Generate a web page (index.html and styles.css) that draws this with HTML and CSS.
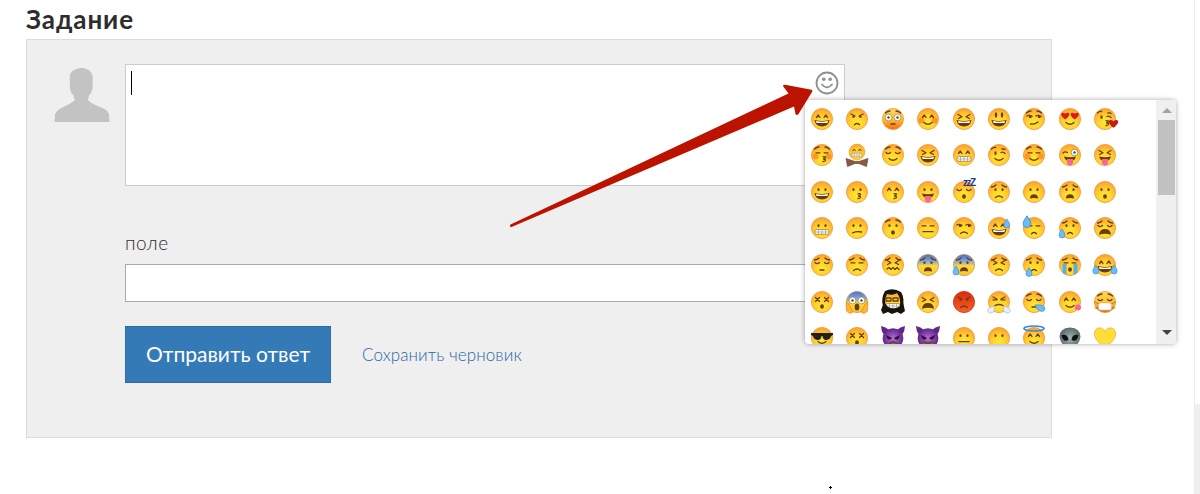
FILE: index.html
```html
<!DOCTYPE html>
<html lang="ru">
<head>
    <meta charset="UTF-8">
    <meta name="viewport" content="width=device-width, initial-scale=1.0">
    <title>Задание</title>
    <link rel="stylesheet" href="styles.css">
</head>
<body>
    <div class="page">
        <h1>Задание</h1>
        <form class="answer">
            <svg class="avatar" viewBox="0 0 56 54">
                <path d="M27 0C32 0 37.500 2 38.500 8Q39 12 38.500 16.500Q39.500 18.500 38 22Q37.500 26 35 27.500Q34.500 31 34 32C40 39 52 38 55 46L55.500 54H.5L1 46C4 39 15 38 21 32Q20 31 19.500 27.500Q17 26 16.500 22Q15 19 16 16.500Q15.500 10 16 6.500Q18 1 27 0Z"/>
            </svg>
            <div class="fields">
                <div class="message">
                    <span class="caret"></span>
                    <svg class="smile" viewBox="0 0 24 24">
                        <circle cx="12" cy="12" r="10.500"/>
                        <path d="M7 13.500q5 6 10 0"/>
                        <circle class="eye" cx="8.800" cy="8.300" r="1.800"/>
                        <circle class="eye" cx="15.200" cy="8.300" r="1.800"/>
                    </svg>
                    <div class="picker">
                        <div class="emojis" id="emojis"></div>
                        <div class="scroll">
                            <i class="up"></i>
                            <div class="thumb"></div>
                            <i class="down"></i>
                        </div>
                    </div>
                </div>
                <label for="field">поле</label>
                <input type="text" id="field">
                <div class="actions">
                    <button type="button">Отправить ответ</button>
                    <a href="#">Сохранить черновик</a>
                </div>
            </div>
        </form>
    </div>
    <div class="side"></div>
    <span class="dot"></span>
    <svg class="arrow" viewBox="0 0 310 150">
        <path d="M1.500 144.500L279.500 13.500L274.300 6.500Q273.500 4.500 276 4.800L302.500 9.800Q304 10.500 303 12L289.500 34Q287.500 36 286.500 34L285 26.500L2.500 147Q0 147.500 1.500 144.500Z"/>
    </svg>
    <svg class="defs">
        <defs>
            <radialGradient id="yellow" cx=".5" cy=".68" r=".68"><stop offset="0" stop-color="#ffe92f"/><stop offset=".5" stop-color="#ffcf2f"/><stop offset="1" stop-color="#fb9f2f"/></radialGradient>
            <linearGradient id="warm" x2="0" y2="1"><stop offset="0" stop-color="#ffd45c"/><stop offset=".5" stop-color="#ffc52b"/><stop offset="1" stop-color="#f5661b"/></linearGradient>
            <linearGradient id="blue" x2="0" y2="1"><stop offset="0" stop-color="#3b6fe0"/><stop offset=".35" stop-color="#92a9cc"/><stop offset=".55" stop-color="#ffd93a"/><stop offset="1" stop-color="#ffc42b"/></linearGradient>
            <linearGradient id="red" x2="0" y2="1"><stop offset="0" stop-color="#dc2a0d"/><stop offset="1" stop-color="#f4622a"/></linearGradient>
            <radialGradient id="purple"><stop offset="0" stop-color="#b56ccf"/><stop offset="1" stop-color="#61268b"/></radialGradient>
            <radialGradient id="grey"><stop offset="0" stop-color="#a6b3b2"/><stop offset="1" stop-color="#586b6e"/></radialGradient>
        </defs>
    </svg>
    <script src="script.js"></script>
</body>
</html>
```
FILE: styles.css
```css
* {
    box-sizing: border-box;
}
body {
    position: relative;
    margin: 0;
    height: 494px;
    overflow: hidden;
    background: #fff;
    color: #2d2d2d;
    font-family: Lato, "Open Sans", sans-serif;
    display: flex;
    justify-content: space-between;
}
.page {
    width: 1026px;
    margin-left: 26px;
}
h1 {
    margin: 0;
    height: 39px;
    padding-top: 2px;
    font-size: 26px;
    line-height: 34px;
    letter-spacing: 0.9px;
    font-weight: bold;
}
.answer {
    display: flex;
    height: 399px;
    padding: 24px 27px 0;
    background: #efefef;
    border: 1px solid #dcdcdc;
}
.avatar {
    width: 56px;
    height: 54px;
    margin: 3.500px 15px 0 0;
    fill: #c3c3c3;
}
.fields {
    width: 720px;
}
.message {
    position: relative;
    height: 122px;
    padding: 6px 5px;
    border: 1px solid #ccc;
    background: #fff;
    display: flex;
    justify-content: space-between;
}
.caret {
    width: 1px;
    height: 24px;
    background: #000;
}
.smile {
    width: 24px;
    height: 24px;
    fill: none;
    stroke: #8b9096;
    stroke-width: 1.8;
    stroke-linecap: round;
}
.smile .eye {
    fill: #8b9096;
    stroke: none;
}
.picker {
    position: absolute;
    left: 679px;
    top: 35px;
    width: 371px;
    height: 244px;
    display: flex;
    overflow: hidden;
    background: #fff;
    border-radius: 4px;
    box-shadow: 0 0 5px rgba(0, 0, 0, 0.35);
}
.emojis {
    flex: 1;
    margin-left: -0.7px;
    display: grid;
    grid-template-columns: repeat(9, 35.4px);
    grid-auto-rows: 36.55px;
    place-items: center;
    align-content: start;
    padding-top: 0.5px;
}
.emojis svg {
    width: 24px;
    height: 24px;
    overflow: visible;
}
.line {
    fill: none;
    stroke: #6b3d0c;
    stroke-width: 1.3;
    stroke-linecap: round;
    stroke-linejoin: round;
}
.ink {
    fill: #6b3d0c;
}
.white {
    fill: #fff;
    stroke: #6b4a20;
    stroke-width: 0.5;
}
.drop {
    fill: #6cbcf5;
    stroke: #3487cf;
    stroke-width: 0.6;
}
.zzz {
    fill: #1e3a8c;
    font: bold 10px "Liberation Sans", sans-serif;
}
.scroll {
    width: 20px;
    padding: 8px 1px 9px 2px;
    background: #f0f0f0;
    display: flex;
    flex-direction: column;
    align-items: center;
}
.thumb {
    width: 17px;
    height: 75px;
    margin: 7px 0 auto;
    background: #c1c1c1;
}
.up,
.down {
    border: 5px solid transparent;
    border-top-width: 0;
    border-bottom-color: #a3a3a3;
}
.down {
    border-width: 5px 5px 0;
    border-top-color: #444;
}
label {
    display: block;
    height: 78px;
    padding-top: 45px;
    font-size: 19px;
    font-weight: 300;
    line-height: 24px;
    letter-spacing: 0.5px;
}
input {
    display: block;
    width: 100%;
    height: 38px;
    border: 1px solid #aaa;
    background: #fff;
}
.actions {
    display: flex;
    align-items: center;
    margin-top: 24px;
}
button {
    width: 206px;
    height: 57px;
    padding: 0 0 2px;
    border: 1px solid #2e6da4;
    background: #337ab7;
    color: #fff;
    font: 21px Lato, "Open Sans", sans-serif;
}
.actions a {
    margin-left: 31px;
    color: #1f68a8;
    font-size: 17px;
    font-weight: 300;
    letter-spacing: 0.1px;
    text-decoration: none;
}
.side {
    width: 6px;
    border-left: 1px solid #ececec;
    background: linear-gradient(#fff 404px, #efefef 404px);
}
.dot {
    position: absolute;
    left: 829px;
    top: 487px;
    width: 3px;
    height: 1px;
    background: #000;
}
.dot::after {
    content: "";
    position: absolute;
    left: 1px;
    top: -1px;
    width: 1px;
    height: 3px;
    background: #000;
}
.arrow {
    position: absolute;
    left: 509px;
    top: 80px;
    width: 310px;
    height: 150px;
    overflow: visible;
    fill: #bb1300;
}
.defs {
    position: absolute;
    width: 0;
    height: 0;
}
```
FILE: script.js
```javascript
const line = d => `<path class="line" d="${d}"/>`;
const ink = d => `<path class="ink" d="${d}"/>`;
const face = fill => `<circle cx="12" cy="12" r="10.600" fill="url(#${fill})" stroke="${fill === 'red' ? '#c9310f' : fill === 'blue' ? '#c09a50' : '#ee9b3c'}" stroke-width=".8"/>`;
const heart = (x, y, s, c) => `<path transform="translate(${x} ${y}) scale(${s})" fill="${c}" d="M0 3C-8-3-3-6 0-3C3-6 8-3 0 3Z"/>`;
const drop = (x, y, s) => `<path class="drop" transform="translate(${x} ${y}) scale(${s})" d="M0-4Q3 0 3 2A3 3 0 0 1-3 2Q-3 0 0-4Z"/>`;
const horns = '<path fill="#61268b" d="M0 0Q5 1 8 4L3 9Q0 5 0 0ZM24 0Q19 1 16 4L21 9Q24 5 24 0Z"/><circle cx="12" cy="12.500" r="10.300" fill="url(#purple)"/>';

const parts = {
    yellow: face('yellow'),
    warm: face('warm'),
    blue: face('blue'),
    red: face('red'),
    imp: horns,

    // eyes
    dots: '<ellipse class="ink" cx="8.500" cy="9.700" rx="1.100" ry="1.400"/><ellipse class="ink" cx="15.500" cy="9.700" rx="1.100" ry="1.400"/>',
    tall: '<ellipse class="ink" cx="9" cy="8" rx="1.200" ry="2.800"/><ellipse class="ink" cx="15" cy="8" rx="1.200" ry="2.800"/>',
    happy: line('M6.500 10.500L8.300 8L10 10.500M14 10.500L15.700 8L17.500 10.500'),
    closed: line('M5 9.500q2.200 2.200 4.500 0M14.500 9.500q2.200 2.200 4.500 0'),
    shut: line('M6 9.800h4M14 9.800h4'),
    squint: line('M6 7.500L10 9.700L6.500 11.500M18 7.500L14 9.700L17.500 11.500'),
    cross: line('M5.500 7.500l4 4m0-4l-4 4M14.500 7.500l4 4m0-4l-4 4'),
    wide: '<circle class="white" cx="7.500" cy="10.500" r="3.400"/><circle class="white" cx="16.500" cy="10.500" r="3.400"/><circle class="ink" cx="7.500" cy="10.500" r="1.200"/><circle class="ink" cx="16.500" cy="10.500" r="1.200"/>',
    hearts: heart(7.3, 9.7, .95, '#db1b18') + heart(16.7, 9.7, .95, '#db1b18'),
    side: line('M5 9q2-1.500 5 .3M14 9q2-1.500 5 .3') + ink('M7 9h2.500v2h-2.500zM16 9h2.500v2h-2.500z'),
    wink: ink('M7.500 8.500h2v3.200h-2z') + line('M14 9.500q2-1 4 1M4.500 6q2-2 4-1.500M15 6q2-.5 3 .5'),
    bigwink: line('M5 10q2-1.800 4.500-.5') + '<circle class="white" cx="16.500" cy="9.500" r="3.300"/><circle cx="16.500" cy="9.500" r="1.300" fill="#456"/>',

    // brows
    raised: line('M4.500 6q2-2 4.500-2M15 4q2.500 0 4.500 2'),
    worried: line('M4.500 7q3-.3 4.500-2M15 5q1.500 1.700 4.500 2'),
    angry: line('M6 7L10 9M18 7L14 9'),

    // mouths
    grin: '<path fill="#683912" d="M4.500 13Q12 15 19.500 13Q18.500 19.500 12 19.500Q5.500 19.500 4.500 13Z"/><path fill="#fff" d="M6 14Q12 15.500 18 14L17.500 16H6.500Z"/>',
    teeth: '<rect class="white" x="5" y="13.500" width="14" height="4.800" rx="2"/><path d="M5.500 16H18.500M8.500 13.500V18.300M12 13.500V18.300M15.500 13.500V18.300" stroke="#8b8b85" stroke-width=".6"/>',
    smile: line('M8 15.500q4 3.500 8 0'),
    smirk: line('M8.500 17q4 .8 7.500-2'),
    frown: line('M8.500 17.500q3.500-3 7 0'),
    pout: line('M9.500 17.800q2.500-2.500 5 0'),
    flat: line('M7 15.700H17'),
    small: line('M10 17H14'),
    slant: line('M7.500 17q4-2 9-1'),
    wavy: line('M6 16l2-1.500 2 2 2-2 2 2 2-2 2 2'),
    kiss: line('M13 13.800q3-.5 2.500 1L13.500 16q3 .3 1.500 2L13 18.700'),
    oh: '<ellipse class="ink" cx="12" cy="16.500" rx="1.900" ry="2.300"/>',
    gape: ink('M8 18.500Q8 14.300 12 14.300Q16 14.300 16 18.500Q12 17.500 8 18.500Z'),
    wail: ink('M6 18.800Q6.500 13 12 13Q17.500 13 18 18.800Q12 16.500 6 18.800Z'),
    tongue: ink('M6 13.500Q12 15 18 13.500Q17 18 12 18Q7 18 6 13.500Z') + '<path fill="#f5679a" d="M9 16H15V19.500Q14.500 22.500 12 22.500Q9.500 22.500 9 19.500Z"/>',

    // extras
    blush: '<circle cx="5.500" cy="13.500" r="3" fill="#fa6a21" opacity=".55"/><circle cx="18.500" cy="13.500" r="3" fill="#fa6a21" opacity=".55"/>',
    love: heart(20.5, 17.5, 1.1, '#c91919'),
    bow: '<path fill="#8a5a42" stroke="#5c3525" stroke-width=".6" d="M1 15.500L10 18.500H14L23 15.500L21.500 23.500L14 20.500H10L2.500 23.500Z"/>',
    zzz: '<text class="zzz" x="11" y="6" textLength="13">zzZ</text>',
    sweat: drop(19.8, 7, 1),
    bead: drop(5, 5, 1.3),
    tearLeft: drop(4, 17, 1),
    tear: drop(7, 18.5, 1),
    streams: '<path fill="#60acdf" d="M4.500 11H8.500V22L4.500 20ZM15.500 11H19.500V20L15.500 22Z"/>',
    joy: drop(2.8, 16, 1) + drop(21.2, 16, 1),
    hands: '<path fill="#ffb52d" stroke="#d87e20" stroke-width=".6" d="M1 12L4 14L8 22Q5 25 1.500 21ZM23 12L20 14L16 22Q19 25 22.500 21Z"/><ellipse class="ink" cx="12" cy="17" rx="2.400" ry="3.500"/>',
    beard: '<path fill="#17130f" fill-rule="evenodd" d="M4 1Q12-3 20 2Q23 7 22 12L24 21L20 24L16 22L11 24L7 22L2 24L0 20L2 15Q0 8 4 1ZM6 4Q2 12 6 16Q12 21 19 16Q20 8 16 3Q12 6 6 4Z"/><path class="line" d="M5 8h5v3h-5zM12 8h5v3h-5z"/>',
    steam: '<path fill="#e8f0fa" stroke="#9db2cb" stroke-width=".6" d="M7 16L2 18Q-1 22 3 23Q6 24 7.500 20ZM17 16L22 18Q25 22 21 23Q18 24 16.500 20Z"/>' + line('M8 15.500q4-2 8 0'),
    bubble: '<path class="drop" d="M13 15Q23 14 23 19Q21 24 15 19Z"/>',
    lick: '<circle cx="20" cy="17.500" r="3" fill="#f36697"/>',
    mask: '<path class="line" stroke-opacity=".4" d="M1.500 12L6 14M22.500 12L18 14M2 18H6M22 18H18"/><rect x="5.500" y="13" width="13" height="7" rx="2" fill="#fff" stroke="#bbb" stroke-width=".5"/>',
    shades: '<path fill="#20201f" d="M1 7H23V9L21 10Q20 14 16 14Q13 14 12.500 10H11.500Q11 14 8 14Q4 14 3 10L1 9Z"/>',
    impEyes: '<path fill="#25103a" d="M5 9L11 12Q8 15 6 12ZM19 9L13 12Q16 15 18 12Z"/>',
    halo: '<ellipse cx="12" cy="2.500" rx="10" ry="2.500" fill="none" stroke="#3a85dc" stroke-width="1.700"/>',
    alien: '<path fill="url(#grey)" d="M12 1.500Q22.500 2 22.500 11Q21 20 12 23Q3 20 1.500 11Q1.500 2 12 1.500Z"/><path fill="#111" d="M3.500 9Q10 8 10.500 14Q5 17 3.500 9ZM20.500 9Q14 8 13.500 14Q19 17 20.500 9Z"/>',
    gold: '<path fill="#ffdf35" stroke="#ecae29" stroke-width=".8" d="M12 22C4 16 1 11 1.500 7C2 1 9 0 12 5.500C15 0 22 1 22.500 7C23 11 20 16 12 22Z"/>'
};

// small grinning face above the bow tie
parts.bowtie = `<g transform="translate(3 0) scale(.75)">${parts.yellow}${parts.happy}${parts.teeth}</g>${parts.bow}`;

const emojis = [
    'yellow happy grin', 'yellow angry dots pout', 'warm raised wide small', 'yellow blush happy smile', 'yellow squint grin', 'yellow tall grin', 'yellow raised side smirk', 'yellow hearts smile', 'yellow wink kiss love',
    'yellow blush shut raised kiss', 'bowtie', 'yellow closed raised smile', 'yellow squint grin', 'yellow happy teeth', 'yellow wink smile', 'yellow blush shut raised smile', 'yellow bigwink tongue', 'yellow squint tongue',
    'yellow dots grin', 'yellow dots kiss', 'yellow happy kiss', 'yellow dots tongue', 'yellow closed oh zzz', 'yellow worried dots frown', 'yellow dots gape', 'yellow worried dots gape', 'yellow dots oh',
    'yellow dots teeth', 'yellow dots slant', 'yellow raised dots oh', 'yellow shut flat', 'yellow side frown', 'yellow happy grin sweat', 'yellow shut pout bead', 'yellow worried dots pout tearLeft', 'yellow worried closed wail',
    'yellow worried closed small', 'yellow worried shut frown', 'yellow worried squint wavy', 'blue worried dots gape', 'blue worried dots gape tearLeft', 'yellow worried squint frown', 'yellow worried dots pout tear', 'yellow worried shut streams oh', 'yellow happy grin joy',
    'yellow cross oh', 'blue wide hands', 'yellow teeth beard', 'yellow squint wail', 'red angry dots frown', 'yellow angry shut steam', 'yellow raised closed small bubble', 'yellow happy smile lick', 'warm closed raised mask',
    'yellow shades smile', 'yellow cross oh', 'imp impEyes frown', 'imp impEyes smile', 'yellow dots flat', 'yellow dots', 'yellow happy smile halo', 'alien', 'gold'
];

document.getElementById('emojis').innerHTML = emojis
    .map(names => `<svg viewBox="0 0 24 24">${names.split(' ').map(n => parts[n]).join('')}</svg>`)
    .join('');
```
